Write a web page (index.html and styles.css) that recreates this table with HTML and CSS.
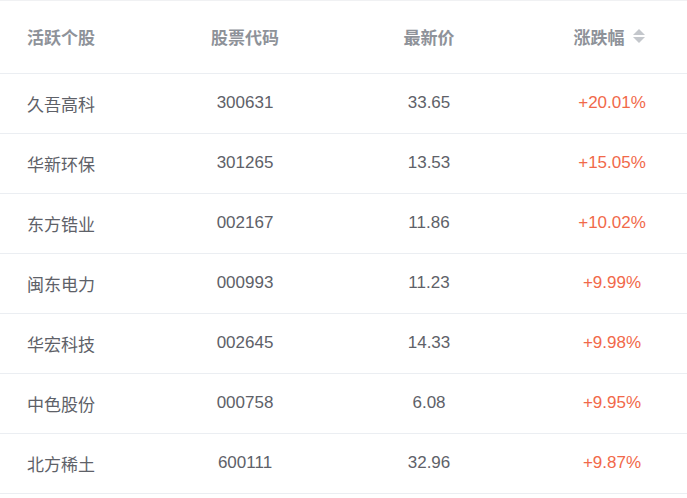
FILE: index.html
```html
<!DOCTYPE html>
<html lang="zh-CN">
<head>
<meta charset="utf-8">
<title>活跃个股</title>
<link rel="stylesheet" href="styles.css">
</head>
<body>
<div class="table">
  <div class="row head">
    <div class="cell c1">活跃个股</div>
    <div class="cell c2">股票代码</div>
    <div class="cell c3">最新价</div>
    <div class="cell c4"><span>涨跌幅</span><span class="caret"><i class="up"></i><i class="down"></i></span></div>
  </div>
  <div class="row"><div class="cell c1">久吾高科</div><div class="cell c2">300631</div><div class="cell c3">33.65</div><div class="cell c4 rise">+20.01%</div></div>
  <div class="row"><div class="cell c1">华新环保</div><div class="cell c2">301265</div><div class="cell c3">13.53</div><div class="cell c4 rise">+15.05%</div></div>
  <div class="row"><div class="cell c1">东方锆业</div><div class="cell c2">002167</div><div class="cell c3">11.86</div><div class="cell c4 rise">+10.02%</div></div>
  <div class="row"><div class="cell c1">闽东电力</div><div class="cell c2">000993</div><div class="cell c3">11.23</div><div class="cell c4 rise">+9.99%</div></div>
  <div class="row"><div class="cell c1">华宏科技</div><div class="cell c2">002645</div><div class="cell c3">14.33</div><div class="cell c4 rise">+9.98%</div></div>
  <div class="row"><div class="cell c1">中色股份</div><div class="cell c2">000758</div><div class="cell c3">6.08</div><div class="cell c4 rise">+9.95%</div></div>
  <div class="row"><div class="cell c1">北方稀土</div><div class="cell c2">600111</div><div class="cell c3">32.96</div><div class="cell c4 rise">+9.87%</div></div>
</div>
</body>
</html>
```

FILE: styles.css
```css
html, body {
  margin: 0;
  padding: 0;
  background: #ffffff;
  overflow: hidden;
}
body {
  font-family: "Liberation Sans", Arial, "Noto Sans CJK SC", sans-serif;
  font-size: 17px;
  color: #5e6168;
}
.table {
  border-top: 1px solid #f0f1f3;
}
.row {
  display: grid;
  grid-template-columns: 153px 184px 184px 1fr;
  height: 58px;
  padding-bottom: 1px;
  border-bottom: 1px solid #ebeef2;
  align-items: center;
}
.row.head {
  height: 70px;
  padding-bottom: 2px;
  font-weight: bold;
  color: #8e9299;
}
.cell {
  text-align: center;
  white-space: nowrap;
}
.c1 {
  text-align: left;
  padding-left: 27px;
}
.c4 {
  padding-left: 16px;
  display: flex;
  justify-content: center;
  align-items: center;
}
.rise {
  color: #f1694a;
}
.caret {
  width: 24px;
  display: flex;
  flex-direction: column;
  align-items: center;
  gap: 2px;
  margin-left: 2px;
}
.caret i {
  display: block;
  width: 0;
  height: 0;
  border-left: 6px solid transparent;
  border-right: 6px solid transparent;
}
.caret .up {
  border-bottom: 6px solid #c4c7cc;
}
.caret .down {
  border-top: 6px solid #c4c7cc;
}
```
